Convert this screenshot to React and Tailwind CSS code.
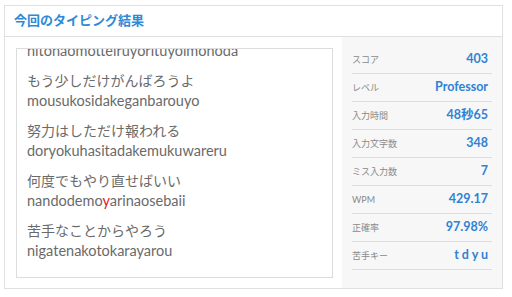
import React from "react";

const lines = [
  { jp: "もう少しだけがんばろうよ", ro: "mousukosidakeganbarouyo" },
  { jp: "努力はしただけ報われる", ro: "doryokuhasitadakemukuwareru" },
  { jp: "何度でもやり直せばいい", ro: "nandodemoyarinaosebaii", miss: 9 },
  { jp: "苦手なことからやろう", ro: "nigatenakotokarayarou" },
];

const stats = [
  { label: "スコア", value: "403" },
  { label: "レベル", value: "Professor" },
  { label: "入力時間", value: "48秒65" },
  { label: "入力文字数", value: "348" },
  { label: "ミス入力数", value: "7" },
  { label: "WPM", value: "429.17" },
  { label: "正確率", value: "97.98%" },
  { label: "苦手キー", value: "t d y u" },
];

const font = {
  fontFamily: '"Lato", "Noto Sans CJK JP", sans-serif',
};

// typed romaji line, with the missed key marked red
const Romaji = ({ text, miss }) => {
  if (miss === undefined) {
    return <div className="h-[20px] leading-[20px] text-[14.5px]">{text}</div>;
  }
  return (
    <div className="h-[20px] leading-[20px] text-[14.5px]">
      {text.slice(0, miss)}
      <span className="text-[#e0202a]">{text[miss]}</span>
      {text.slice(miss + 1)}
    </div>
  );
};

const App = () => {
  return (
    <div className="w-[512px] h-[297px] bg-white pt-[5px] pl-[4px]" style={font}>
      <div className="w-[499px] h-[284px] border border-[#e0e0e0] flex flex-col">
        {/* Header */}
        <div className="h-[31px] border-b border-[#e0e0e0] flex items-center pl-[9px]">
          <span className="text-[13px] font-bold text-[#2f8ad6]">今回のタイピング結果</span>
        </div>

        <div className="flex flex-1">
          {/* Typed sentences (scrolled list) */}
          <div className="w-[337px] pl-[11px] pr-[9px] pt-[11px] pb-[10px]">
            <div className="h-full border border-[#dcdcdc] overflow-hidden pl-[10px] text-[14px] text-[#6a6a6a]">
              <div className="-mt-[8px]">
                <Romaji text="nitonaomotteiruyorituyoimonoda" />
                {lines.map((l) => (
                  <div key={l.ro} className="pt-[10px]">
                    <div className="h-[20px] leading-[20px]">{l.jp}</div>
                    <Romaji text={l.ro} miss={l.miss} />
                  </div>
                ))}
              </div>
            </div>
          </div>

          {/* Result stats */}
          <div className="flex-1 bg-[#f7f7f7] pt-[9px] pl-[10px] pr-[10px]">
            {stats.map((s) => (
              <div
                key={s.label}
                className="h-[28px] border-b border-[#dedede] flex items-center justify-between pr-[4px]"
              >
                <span className="text-[9px] text-[#8a8a8a]">{s.label}</span>
                <span className="text-[12.5px] font-bold text-[#2f82d4]">{s.value}</span>
              </div>
            ))}
          </div>
        </div>
      </div>
    </div>
  );
};

export default App;
